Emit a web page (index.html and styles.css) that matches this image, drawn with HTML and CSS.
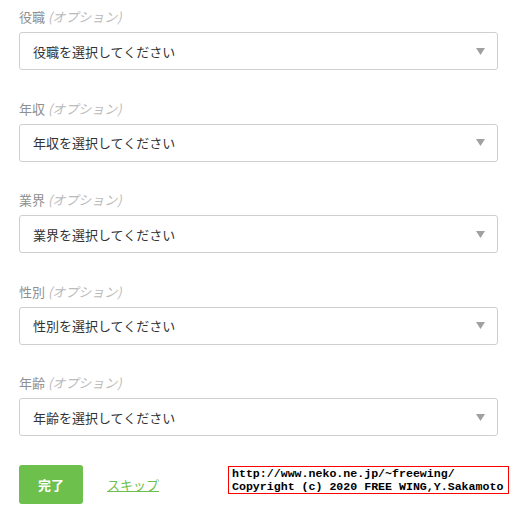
FILE: index.html
```html
<!DOCTYPE html>
<html lang="ja">
<head>
<meta charset="utf-8">
<link rel="stylesheet" href="styles.css">
</head>
<body>
<form class="form">
  <div class="group">
    <div class="label">役職 <span class="opt">(オプション)</span></div>
    <div class="select"><span>役職を選択してください</span><svg class="arrow" width="9" height="7" viewBox="0 0 9 7"><path d="M0 0H9L4.5 7Z" fill="#a0a0a0"/></svg></div>
  </div>
  <div class="group">
    <div class="label">年収 <span class="opt">(オプション)</span></div>
    <div class="select"><span>年収を選択してください</span><svg class="arrow" width="9" height="7" viewBox="0 0 9 7"><path d="M0 0H9L4.5 7Z" fill="#a0a0a0"/></svg></div>
  </div>
  <div class="group">
    <div class="label">業界 <span class="opt">(オプション)</span></div>
    <div class="select"><span>業界を選択してください</span><svg class="arrow" width="9" height="7" viewBox="0 0 9 7"><path d="M0 0H9L4.5 7Z" fill="#a0a0a0"/></svg></div>
  </div>
  <div class="group">
    <div class="label">性別 <span class="opt">(オプション)</span></div>
    <div class="select"><span>性別を選択してください</span><svg class="arrow" width="9" height="7" viewBox="0 0 9 7"><path d="M0 0H9L4.5 7Z" fill="#a0a0a0"/></svg></div>
  </div>
  <div class="group">
    <div class="label">年齢 <span class="opt">(オプション)</span></div>
    <div class="select"><span>年齢を選択してください</span><svg class="arrow" width="9" height="7" viewBox="0 0 9 7"><path d="M0 0H9L4.5 7Z" fill="#a0a0a0"/></svg></div>
  </div>
  <div class="actions">
    <div class="btn">完了</div>
    <a class="skip" href="#">スキップ</a>
  </div>
</form>
<div class="copyright">http://www.neko.ne.jp/~freewing/<br>Copyright (c) 2020 FREE WING,Y.Sakamoto</div>
</body>
</html>
```
FILE: styles.css
```css
html, body {
  margin: 0;
  padding: 0;
  background: #fff;
}
body {
  font-family: "Noto Sans CJK JP", "Noto Sans", sans-serif;
  font-size: 13px;
  color: #333;
  width: 524px;
  height: 520px;
  position: relative;
  overflow: hidden;
}
.form {
  padding: 7px 26px 0 19px;
}
.group {
  margin-bottom: 28.5px;
}
.label {
  height: 20px;
  line-height: 20px;
  color: #8f8f8f;
  margin-bottom: 5px;
}
.opt {
  color: #bbbbbb;
  font-style: italic;
}
.select {
  box-sizing: border-box;
  height: 38px;
  border: 1px solid #cfcfcf;
  border-radius: 3px;
  display: flex;
  align-items: center;
  justify-content: space-between;
  padding: 0 12px 0 13px;
  color: #333;
}
.arrow {
  display: block;
}
.actions {
  display: flex;
  align-items: center;
}
.btn {
  width: 64px;
  height: 39px;
  border-radius: 3px;
  background: #6cc04b;
  color: #fff;
  font-weight: bold;
  display: flex;
  align-items: center;
  justify-content: center;
}
.skip {
  margin-left: 24px;
  color: #6cc04b;
  text-decoration: underline;
}
.copyright {
  position: absolute;
  left: 228px;
  top: 466px;
  border: 1px solid #f00;
  background: #fff;
  color: #000;
  font-family: "Liberation Mono", monospace;
  font-weight: bold;
  font-size: 11.6px;
  line-height: 13px;
  padding: 0 3px 0 3px;
  width: 273px;
  white-space: nowrap;
}
```
